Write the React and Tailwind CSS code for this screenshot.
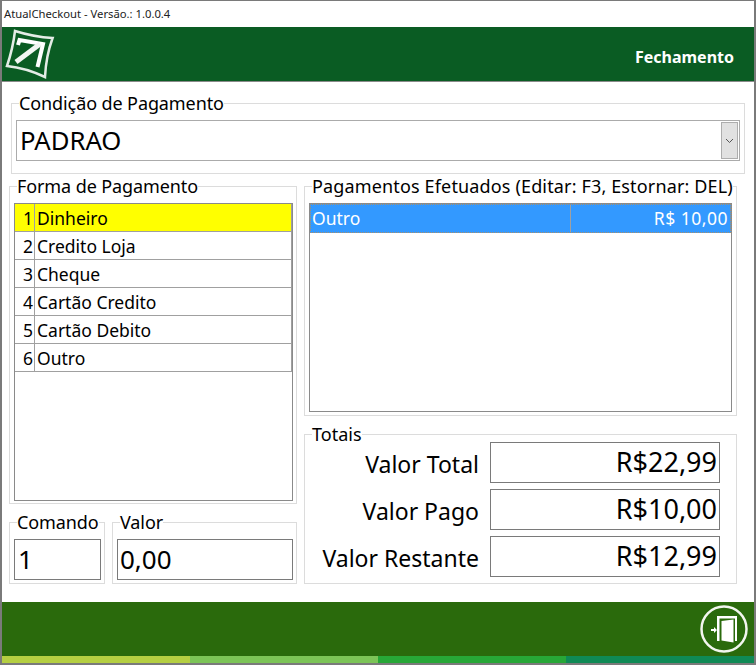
const formas = [
  { n: 1, nome: "Dinheiro" },
  { n: 2, nome: "Credito Loja" },
  { n: 3, nome: "Cheque" },
  { n: 4, nome: "Cartão Credito" },
  { n: 5, nome: "Cartão Debito" },
  { n: 6, nome: "Outro" },
];

const totais = [
  { label: "Valor Total", valor: "R$22,99" },
  { label: "Valor Pago", valor: "R$10,00" },
  { label: "Valor Restante", valor: "R$12,99" },
];

function Grupo({ titulo, className, legendClass = "ml-[3px] tracking-[-0.1px]", children }) {
  return (
    <fieldset className={"border border-[#dcdcdc] min-w-0 " + className}>
      <legend className={"whitespace-nowrap text-[18px] leading-[20px] text-black " + legendClass}>{titulo}</legend>
      {children}
    </fieldset>
  );
}

function Logo() {
  return (
    <svg width="50" height="52" viewBox="5 28 50 52" className="ml-[3px]">
      <path d="M15 31 Q34 37 52.6 38 Q46 56 45 77 Q26 68 7 66 Q13 48 15 31Z" fill="none" stroke="#e4ece6" strokeWidth="2.5" />
      <path d="M18 45 L19.5 40 L43 44 L37.5 67" fill="none" stroke="#fff" strokeWidth="4" />
      <path d="M16 62 L40 44" fill="none" stroke="#f2f6f2" strokeWidth="5" />
    </svg>
  );
}

function Sair() {
  return (
    <svg width="50" height="50" viewBox="0 0 50 50">
      <circle cx="25" cy="25" r="22.5" fill="none" stroke="#f2f6ee" strokeWidth="2.5" />
      <path d="M18 12 H38 V37 H36 V14.5 H20.5 V37 H18Z" fill="#fff" />
      <path d="M22.5 17 L34.5 15.5 V38.5 L22.5 36.5Z" fill="#fff" />
      <path d="M12 25 H15 V23 L18 26 L15 29 V27 H12Z" fill="#fff" />
    </svg>
  );
}

export default function App() {
  return (
    <div className="w-[756px] h-[665px] flex flex-col bg-white border-x-2 border-t border-b-2 border-[#7a7a7a] font-['Noto_Sans','Liberation_Sans',sans-serif] text-black">
      <div className="h-[26px] flex items-center pl-[2px] text-[11.25px] text-[#222]">AtualCheckout - Versão.: 1.0.0.4</div>

      <header className="h-[55px] bg-[#0a5c23] border-b border-[#8a8a8a] flex items-center justify-between pr-[20px]">
        <Logo />
        <span className="pt-[6px] text-[16px] font-bold text-white">Fechamento</span>
      </header>

      <main className="flex-1 flex flex-col pt-[11px]">
        <Grupo titulo="Condição de Pagamento" className="ml-[9px] mr-[9px] h-[81px] px-[4px] pt-[7px]">
          <div className="h-[41px] border border-[#ababab] flex items-center justify-between pl-[3px] pr-[1px]">
            <span className="pt-[2px] text-[25.7px]">PADRAO</span>
            <div className="w-[17px] h-[37px] bg-[#e1e1e1] border border-[#adadad] flex items-center justify-center">
              <svg width="9" height="6" viewBox="0 0 9 6">
                <path d="M1 1 L4.5 4.5 L8 1" fill="none" stroke="#555" />
              </svg>
            </div>
          </div>
        </Grupo>

        <div className="flex gap-[7px] pl-[7px] mt-[2px]">
          <div className="w-[288px] flex flex-col gap-[8px]">
            <Grupo titulo="Forma de Pagamento" className="h-[328px] pl-[4px] pr-[3px] pt-[7px]">
              <div className="h-[298px] border border-[#8a8a8a]">
                {formas.map((f, i) => (
                  <div key={f.n} className={"h-[28px] flex border-b border-r border-[#a0a0a0] text-[17.5px] leading-[27px] pt-[1px] " + (i === 0 ? "bg-[#ffff00]" : "bg-white")}>
                    <div className="w-[20px] pr-[1px] border-r border-[#a0a0a0] text-right -mt-[1px] pt-[1px]">{f.n}</div>
                    <div className="pl-[2px]">{f.nome}</div>
                  </div>
                ))}
              </div>
            </Grupo>
            <div className="flex gap-[7px]">
              <Grupo titulo="Comando" className="w-[96px] h-[72px] pl-[4px] pr-[3px] pt-[7px]">
                <div className="h-[41px] border border-[#7a7a7a] pl-[3px] text-[26px] leading-[39px]">1</div>
              </Grupo>
              <Grupo titulo="Valor" className="w-[185px] h-[72px] pl-[4px] pr-[3px] pt-[7px]">
                <div className="h-[41px] border border-[#7a7a7a] pl-[2px] text-[26px] leading-[39px]">0,00</div>
              </Grupo>
            </div>
          </div>

          <div className="w-[433px] flex flex-col gap-[8px]">
            <Grupo titulo="Pagamentos Efetuados (Editar: F3, Estornar: DEL)" legendClass="ml-[3px] tracking-[0.15px]" className="h-[240px] px-[4px] pt-[7px]">
              <div className="h-[209px] border border-[#8a8a8a]">
                <div className="h-[29px] flex bg-[#3399ff] text-white text-[17.5px] border border-dotted border-[#a8906c]">
                  <div className="w-[260px] border-r border-[#a0a0a0] pl-[1px] leading-[26px]">Outro</div>
                  <div className="flex-1 text-right pr-[2px] leading-[26px] tracking-[0.5px]">R$ 10,00</div>
                </div>
              </div>
            </Grupo>
            <Grupo titulo="Totais" legendClass="ml-[7px]" className="h-[160px]">
              <div className="flex flex-col gap-[6px] -mt-[2px]">
                {totais.map((t) => (
                  <div key={t.label} className="flex items-center">
                    <div className="w-[174px] pt-[3px] text-right text-[23px]">{t.label}</div>
                    <div className="ml-[11px] w-[230px] h-[41px] border border-[#7a7a7a] pr-[2px] text-right text-[27px] leading-[38px]">{t.valor}</div>
                  </div>
                ))}
              </div>
            </Grupo>
          </div>
        </div>
      </main>

      <footer className="h-[54px] bg-[#2a6a0c] flex items-center justify-end pr-[5px]">
        <Sair />
      </footer>
      <div className="h-[7px] flex">
        <div className="flex-1 bg-[#b5cf42]" />
        <div className="flex-1 bg-[#7cc457]" />
        <div className="flex-1 bg-[#27a737]" />
        <div className="flex-1 bg-[#0f8a55]" />
      </div>
    </div>
  );
}
